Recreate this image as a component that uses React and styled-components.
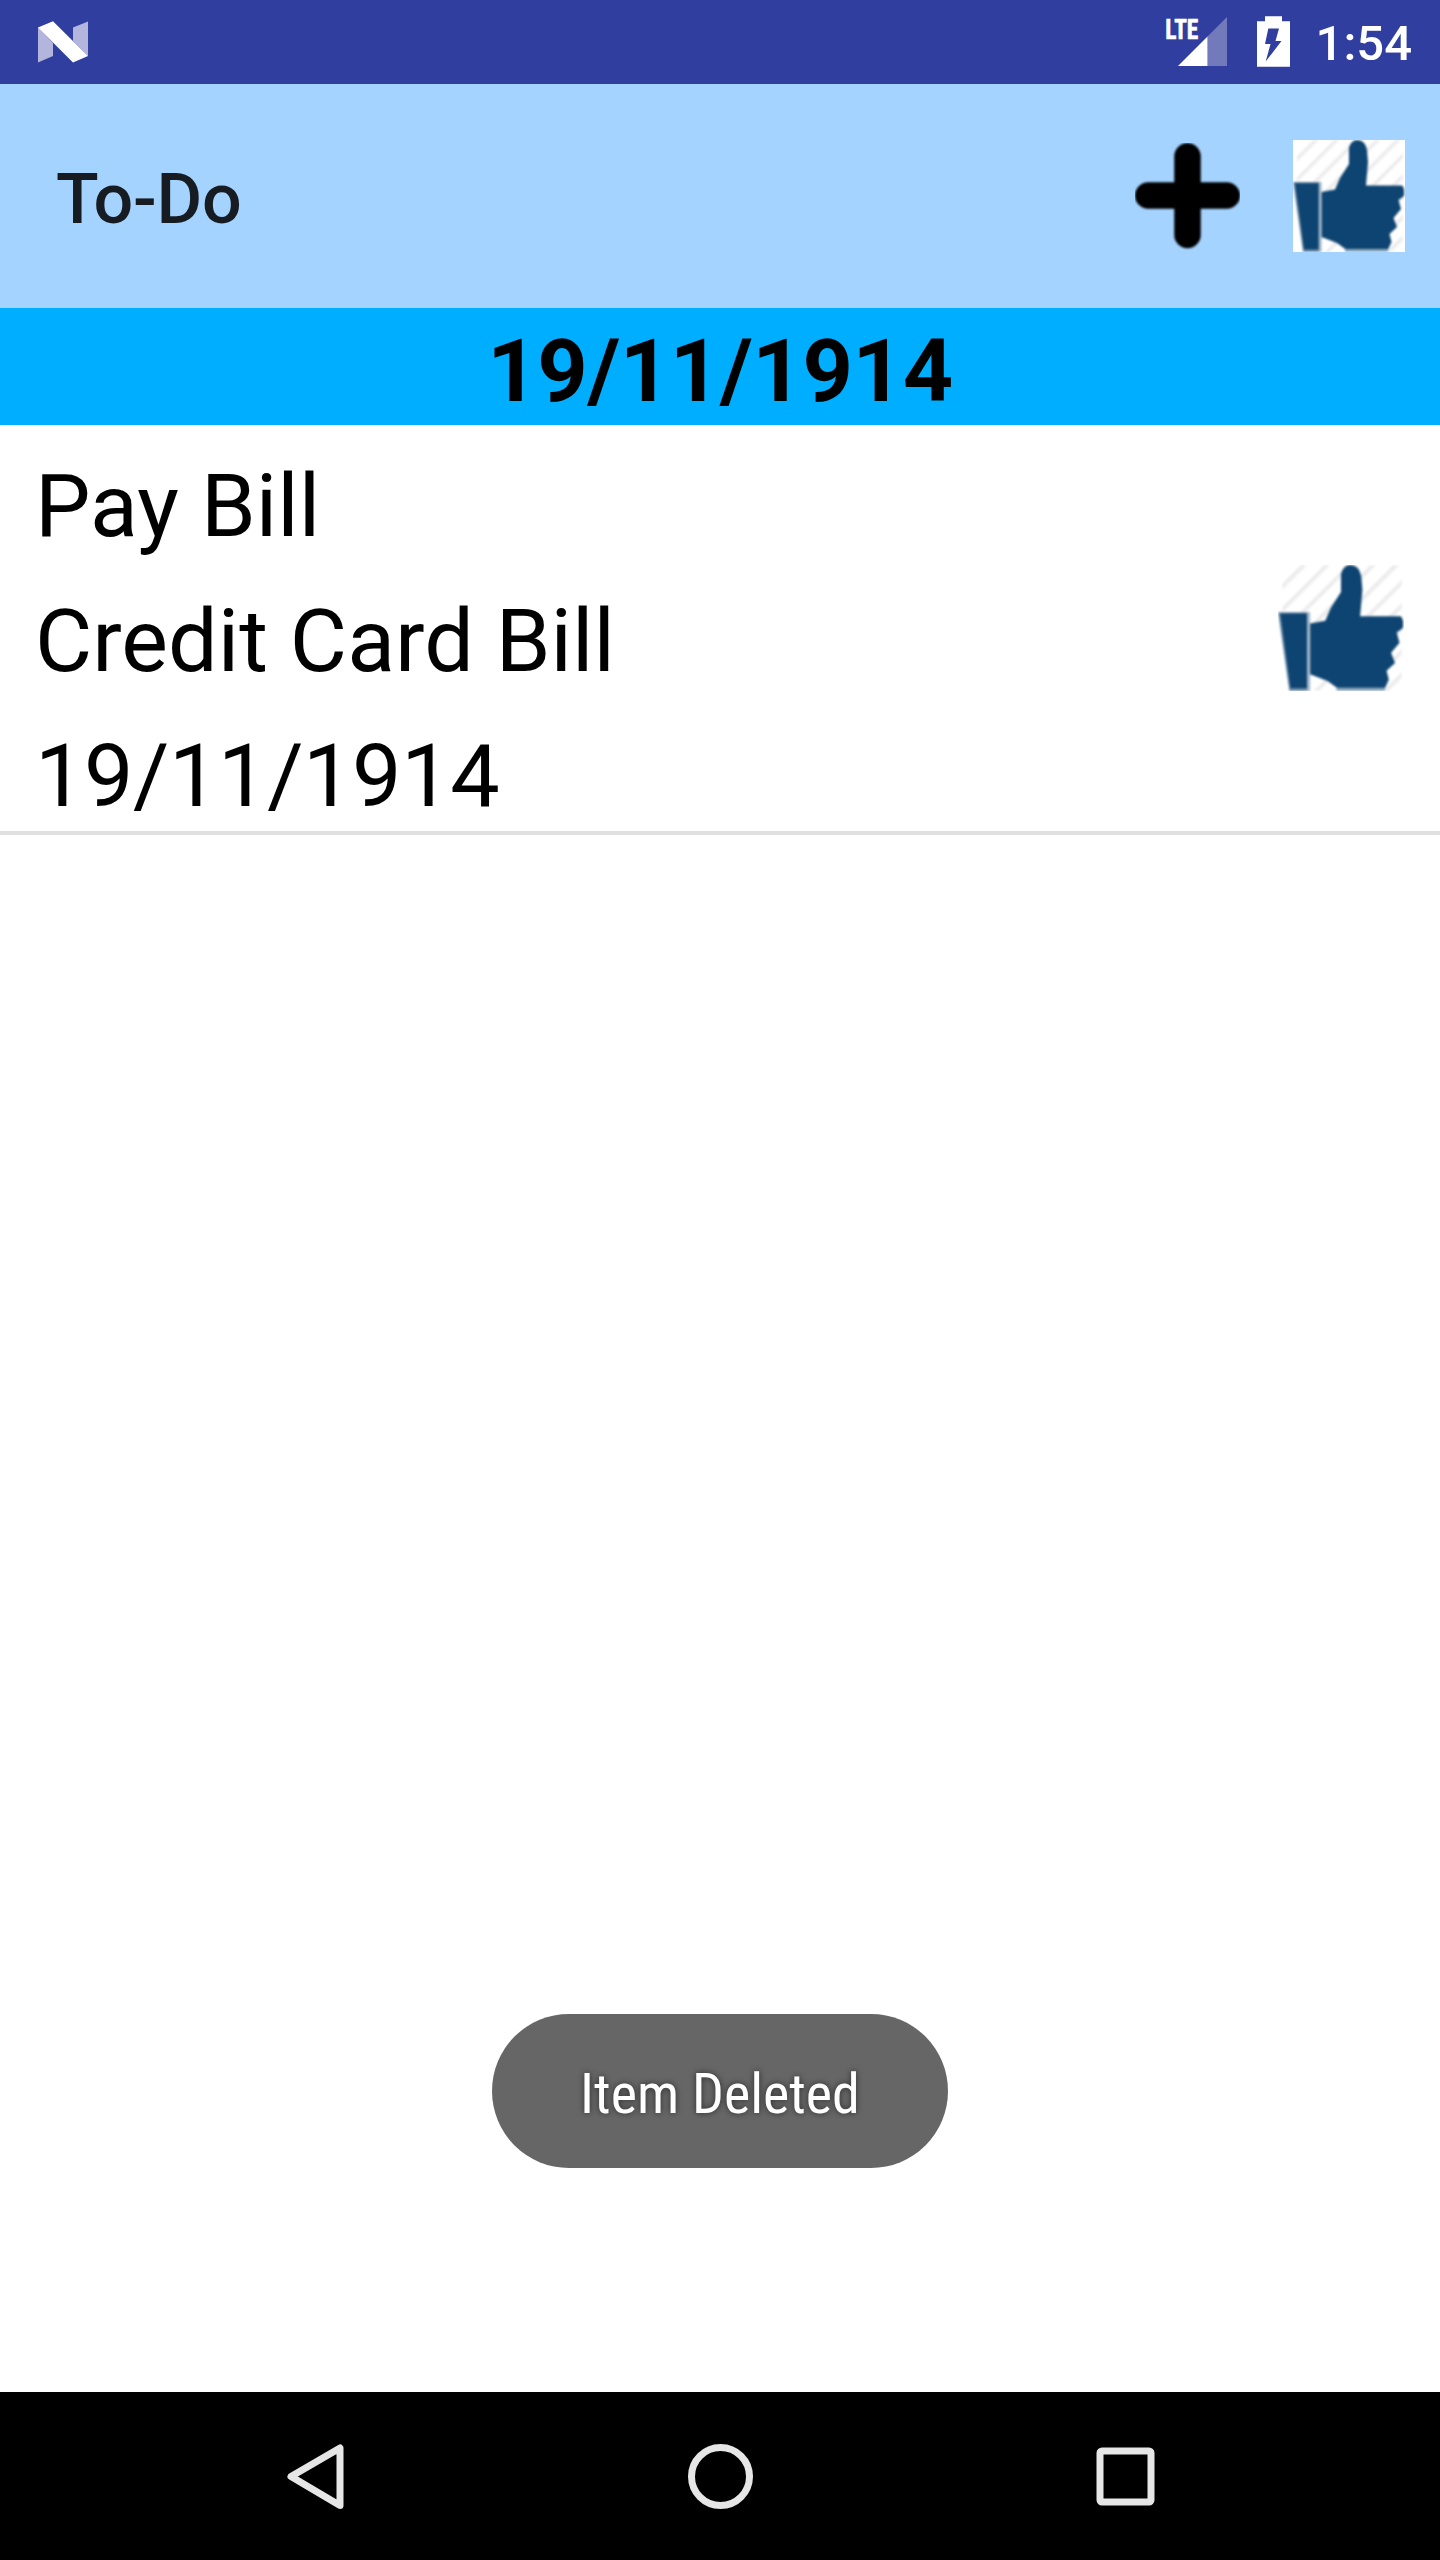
import React from "react";
import styled, { createGlobalStyle } from "styled-components";

const GlobalStyle = createGlobalStyle`
  * { box-sizing: border-box; }
  body { margin: 0; background: #fff; }
`;

const Screen = styled.div`
  position: relative;
  display: flex;
  flex-direction: column;
  width: 1440px;
  height: 2560px;
  background: #fff;
  font-family: Roboto, "Noto Sans", sans-serif;
  color: #000;
`;

const StatusBar = styled.header`
  display: flex;
  align-items: flex-start;
  justify-content: space-between;
  height: 84px;
  padding: 0 28px 0 37px;
  background: #303f9f;
`;

const StatusIcons = styled.div`
  display: flex;
  align-items: flex-start;
`;

const StatusSvg = styled.svg`
  display: block;
  flex: none;
`;

const Clock = styled.span`
  margin-left: 26px;
  padding-top: 15px;
  font-size: 49px;
  font-weight: 500;
  line-height: 58px;
  color: #fff;
`;

const AppBar = styled.div`
  display: flex;
  align-items: center;
  height: 224px;
  padding: 0 35px 0 56px;
  background: #a5d3ff;
`;

const Title = styled.h1`
  flex: 1;
  margin: 0;
  padding-top: 6px;
  font-size: 70px;
  font-weight: 500;
  line-height: 82px;
  letter-spacing: -0.3px;
  color: #161c22;
`;

const IconButton = styled.button`
  display: block;
  margin: 0 0 0 ${(p) => p.$gap || 0}px;
  padding: 0;
  border: 0;
  background: none;
  svg { display: block; }
`;

const DateHeader = styled.h2`
  height: 117px;
  margin: 0;
  padding-top: 11px;
  background: #00aeff;
  font-size: 88px;
  font-weight: 700;
  line-height: 104px;
  letter-spacing: -0.35px;
  text-align: center;
`;

const TodoItem = styled.section`
  display: flex;
  align-items: center;
  justify-content: space-between;
  height: 410px;
  padding: 0 36px 0 35px;
  border-bottom: 4px solid #e0e0e0;
`;

const TodoText = styled.div`
  display: flex;
  flex-direction: column;
  padding-top: 25px;
`;

const Line = styled.span`
  height: 135px;
  font-size: 88px;
  line-height: 135px;
  letter-spacing: ${(p) => (p.$numeric ? "-0.4px" : "0.04px")};
  white-space: nowrap;
`;

const Spacer = styled.main`
  flex: 1;
`;

const Toast = styled.div`
  position: absolute;
  left: 492px;
  top: 2014px;
  display: flex;
  align-items: center;
  justify-content: center;
  width: 456px;
  height: 154px;
  padding-top: 6px;
  border-radius: 77px;
  background: #666;
`;

const ToastText = styled.span`
  font-family: "Roboto Condensed", Roboto, sans-serif;
  font-size: 56px;
  line-height: 66px;
  white-space: nowrap;
  color: #fff;
  text-shadow: 0 0 6px rgba(0, 0, 0, 0.6);
`;

const NavBar = styled.nav`
  display: flex;
  align-items: center;
  justify-content: space-between;
  height: 168px;
  padding: 0 270px 0 271px;
  background: #000;
`;

const NavButton = styled.button`
  width: 90px;
  height: 90px;
  padding: 0;
  border: 0;
  background: none;
  svg { display: block; }
`;

const NougatLogo = () => (
  <StatusSvg width="52" height="84" viewBox="37 0 52 84">
    <path d="M38 27L53 43V56L38 62.5Z" fill="#b3b5dc" />
    <path d="M88 21.5V56L73 41V27.5Z" fill="#b3b5dc" />
    <path d="M38 27.5L53 21.3L88 56L73 62.5Z" fill="#fff" />
  </StatusSvg>
);

const LteText = styled.text`
  font-family: "Roboto Condensed", Roboto, sans-serif;
  font-size: 28.5px;
  font-weight: 700;
  fill: #fff;
  stroke: #fff;
  stroke-width: 0.6px;
`;

const Signal = () => (
  <StatusSvg width="64" height="84" viewBox="1164 0 64 84">
    <LteText x="1165.3" y="38.6" textLength="33" lengthAdjust="spacingAndGlyphs">LTE</LteText>
    <path d="M1207.5 36.5L1227 17V66H1207.5Z" fill="#737abb" />
    <path d="M1178 66L1207.5 36.5V66Z" fill="#fff" />
  </StatusSvg>
);

const Battery = () => (
  <StatusSvg width="62" height="84" viewBox="1228 0 62 84">
    <path
      fillRule="evenodd"
      fill="#fff"
      d="M1265 16.3H1282V21.3H1290V66.7H1257V21.3H1265ZM1268.3 28.5L1265 44H1270.5L1265.7 61.5L1281.5 41H1275.5L1279 28.5Z"
    />
  </StatusSvg>
);

const SoftGroup = styled.g`
  filter: blur(0.8px);
`;

const PlusIcon = () => (
  <svg width="105" height="107" viewBox="0 0 105 107" fill="none" stroke="#000" strokeWidth="26.5" strokeLinecap="round">
    <SoftGroup>
      <path d="M52.5 13.300V92M13.2 52.500H91.8" />
    </SoftGroup>
  </svg>
);

const ThumbIcon = ({ size, name }) => (
  <svg width={size} height={size} viewBox="0 0 112 112">
    <defs>
      <pattern id={name} width="14.5" height="14.5" patternUnits="userSpaceOnUse" patternTransform="rotate(45)">
        <rect width="3.6" height="14.5" fill="#ececec" />
      </pattern>
    </defs>
    <rect width="112" height="112" fill="#fff" />
    <SoftGroup>
      <path d="M10 0H110V112H25L4 60V8Z" fill={`url(#${name})`} />
      <path d="M0 42H27V112H10Z" fill="#6f8ea8" />
      <path d="M2 43.200H25.800V109.500H11Z" fill="#0e4471" />
      <path d="M27.200 42V112" stroke="#a3b8ca" strokeWidth="2.8" />
      <path
        d="M28.600 52L42 49.500L47 38L56 24V8Q58 0 64.500 0Q72 0 74 10L75 22L73 45.500H109Q112 48 111 56L105.500 60L108 69L100.500 78L104 87L96.500 94L98.500 102L95 109.500H53L44 103L28.600 97Z"
        fill="#0e4471"
      />
      <path d="M52 110.500H95" stroke="#8fa9be" strokeWidth="3" />
    </SoftGroup>
  </svg>
);

export default function App() {
  return (
    <Screen>
      <GlobalStyle />
      <StatusBar>
        <NougatLogo />
        <StatusIcons>
          <Signal />
          <Battery />
          <Clock>1:54</Clock>
        </StatusIcons>
      </StatusBar>
      <AppBar>
        <Title>To-Do</Title>
        <IconButton aria-label="Add"><PlusIcon /></IconButton>
        <IconButton aria-label="Done" $gap={53}><ThumbIcon size={112} name="hatchBar" /></IconButton>
      </AppBar>
      <DateHeader>19/11/1914</DateHeader>
      <TodoItem>
        <TodoText>
          <Line>Pay Bill</Line>
          <Line>Credit Card Bill</Line>
          <Line $numeric>19/11/1914</Line>
        </TodoText>
        <IconButton aria-label="Complete"><ThumbIcon size={126} name="hatchItem" /></IconButton>
      </TodoItem>
      <Spacer />
      <Toast role="status"><ToastText>Item Deleted</ToastText></Toast>
      <NavBar>
        <NavButton aria-label="Back">
          <svg width="90" height="90" viewBox="271 2431 90 90" fill="none" stroke="#e6e6e6" strokeWidth="7" strokeLinejoin="round">
            <path d="M340 2448V2505.500L291 2476.500Z" />
          </svg>
        </NavButton>
        <NavButton aria-label="Home">
          <svg width="90" height="90" viewBox="676 2431 90 90" fill="none" stroke="#e6e6e6" strokeWidth="7">
            <circle cx="720.500" cy="2476.500" r="29" />
          </svg>
        </NavButton>
        <NavButton aria-label="Overview">
          <svg width="90" height="90" viewBox="1080 2431 90 90" fill="none" stroke="#e6e6e6" strokeWidth="7">
            <rect x="1100" y="2451" width="51" height="51" rx="2" />
          </svg>
        </NavButton>
      </NavBar>
    </Screen>
  );
}
